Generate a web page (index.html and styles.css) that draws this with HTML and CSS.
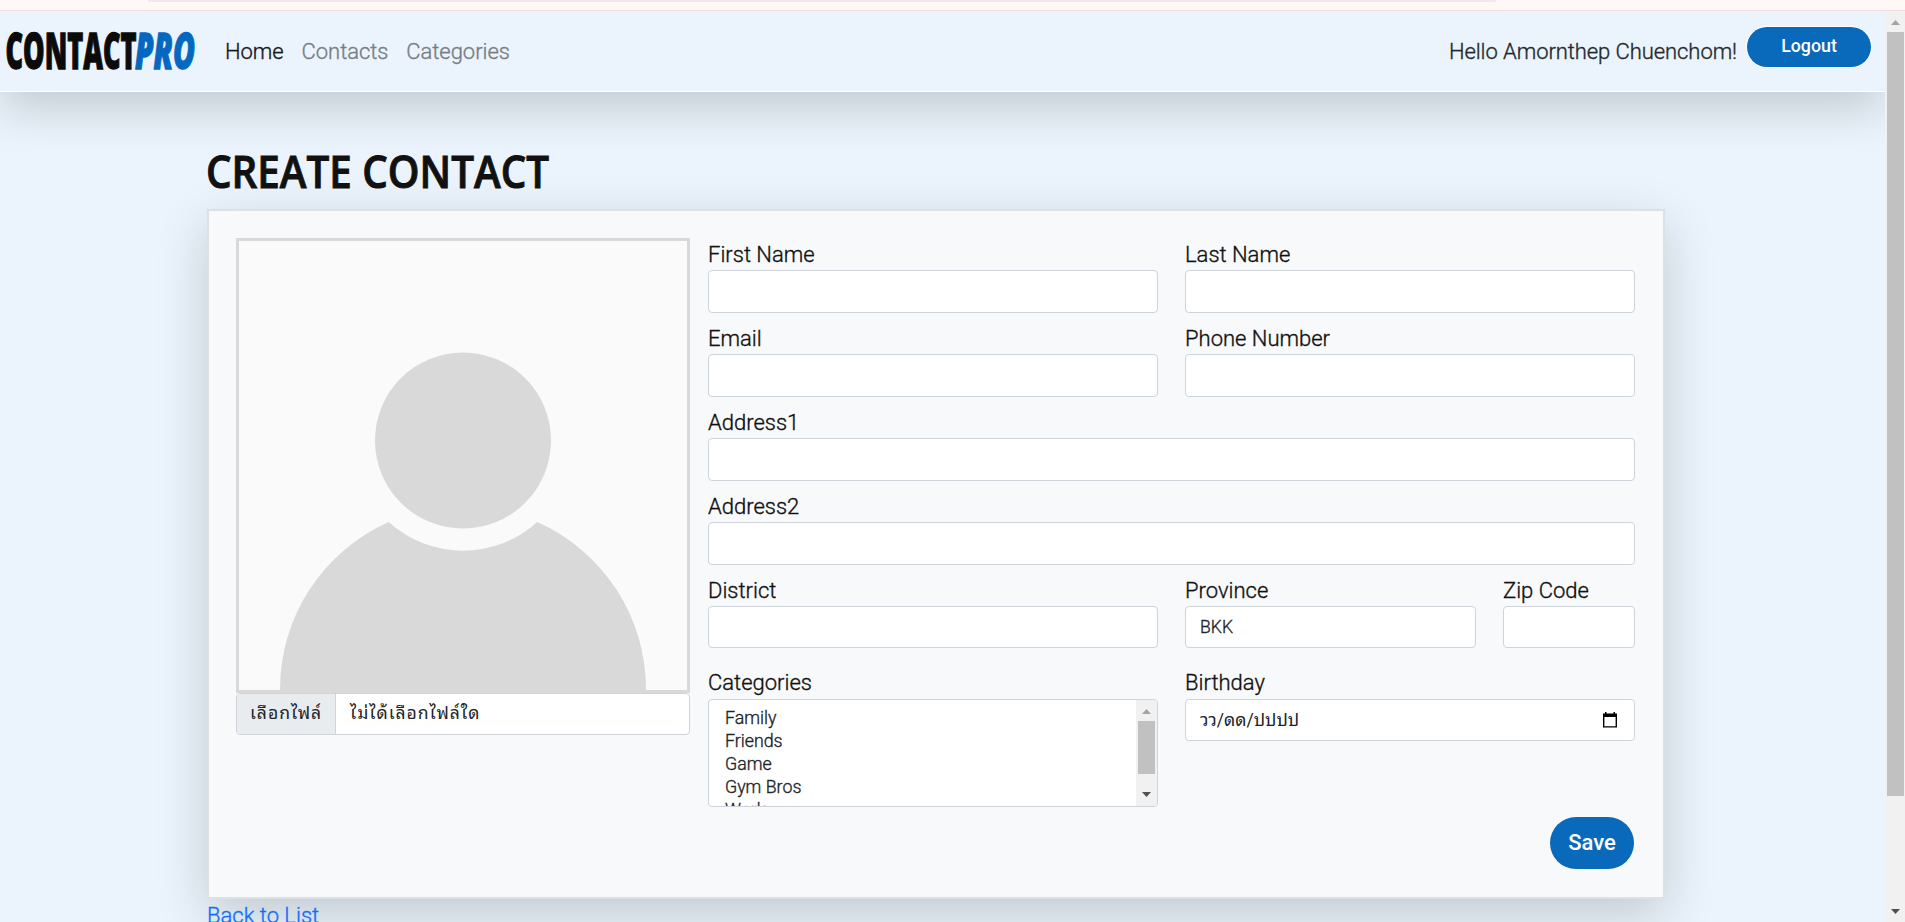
FILE: index.html
```html
<!DOCTYPE html>
<html lang="th">
<head>
<meta charset="utf-8">
<title>Create Contact - ContactPro</title>
<link rel="stylesheet" href="styles.css">
</head>
<body>
<div class="chrome"><div class="omnibox"></div></div>
<div class="viewport">
  <div class="page">
    <nav class="navbar">
      <svg class="logo" width="200" height="60" viewBox="0 0 200 60">
        <text class="logo-dark" x="-0.5" y="42.5" textLength="131" lengthAdjust="spacingAndGlyphs">CONTACT</text>
        <text class="logo-blue" x="129" y="42.5" textLength="60" lengthAdjust="spacingAndGlyphs">PRO</text>
      </svg>
      <a class="nav-link active">Home</a>
      <a class="nav-link">Contacts</a>
      <a class="nav-link">Categories</a>
      <span class="hello">Hello Amornthep Chuenchom!</span>
      <a class="logout">Logout</a>
    </nav>
    <main class="container">
      <h1 class="title"><svg width="360" height="60"><text x="-1" y="45" textLength="343" lengthAdjust="spacingAndGlyphs">CREATE CONTACT</text></svg></h1>
      <section class="card">
        <div class="photo-col">
          <svg class="avatar" viewBox="0 0 448 449">
            <circle cx="224" cy="199.5" r="88"/>
            <path d="M41 449A183 183 0 0 1 149.7 281A110.7 110.7 0 0 0 298.3 281A183 183 0 0 1 407 449Z"/>
          </svg>
          <div class="file"><span class="file-btn">เลือกไฟล์</span><span class="file-name">ไม่ได้เลือกไฟล์ใด</span></div>
        </div>
        <form class="form">
          <div class="field half"><label>First Name</label><div class="control"></div></div>
          <div class="field half"><label>Last Name</label><div class="control"></div></div>
          <div class="field half"><label>Email</label><div class="control"></div></div>
          <div class="field half"><label>Phone Number</label><div class="control"></div></div>
          <div class="field full"><label>Address1</label><div class="control"></div></div>
          <div class="field full"><label>Address2</label><div class="control"></div></div>
          <div class="field half"><label>District</label><div class="control short"></div></div>
          <div class="half split">
            <div class="field"><label>Province</label><div class="control short">BKK</div></div>
            <div class="field"><label>Zip Code</label><div class="control short"></div></div>
          </div>
          <div class="field half last"><label>Categories</label>
            <div class="listbox">
              <ul class="options"><li>Family</li><li>Friends</li><li>Game</li><li>Gym Bros</li><li>Work</li></ul>
              <div class="list-scroll">
                <svg width="9" height="5"><path d="M0 5L4.5 0L9 5Z" fill="#a3a3a3"/></svg>
                <div class="list-thumb"></div>
                <svg width="9" height="5"><path d="M0 0L4.5 5L9 0Z" fill="#505050"/></svg>
              </div>
            </div>
          </div>
          <div class="field half last"><label>Birthday</label>
            <div class="control short date"><span>วว/ดด/ปปปป</span>
              <svg width="14" height="16" viewBox="0 0 14 16"><path d="M0 1.5H2V0H3.5V1.5H10.5V0H12V1.5H14V15.5H0ZM1.4 5V14.2H12.6V5Z" fill-rule="evenodd"/></svg>
            </div>
          </div>
          <div class="actions"><span class="save">Save</span></div>
        </form>
      </section>
      <a class="back">Back to List</a>
    </main>
  </div>
  <div class="scrollbar">
    <svg width="9" height="5"><path d="M0 5L4.5 0L9 5Z" fill="#a3a3a3"/></svg>
    <div class="thumb"></div>
    <svg class="down" width="9" height="5"><path d="M0 0L4.5 5L9 0Z" fill="#505050"/></svg>
  </div>
</div>
</body>
</html>
```
FILE: styles.css
```css
* { box-sizing: border-box; }
body {
  margin: 0;
  height: 922px;
  overflow: hidden;
  font: 300 22px/33px Roboto, "Noto Sans Thai Looped", Loma, Waree, Garuda, "Noto Sans", sans-serif;
  -webkit-text-stroke: .35px;
  color: #111;
  background: #ebf4fc;
}
.chrome { height: 11px; background: #fff8f6; border-bottom: 1px solid #f8dcdf; }
.omnibox { width: 1348px; height: 2px; margin-left: 148px; background: #f4e6ea; border-radius: 0 0 8px 8px; }
.viewport { display: flex; height: 911px; }
.page { flex: 1; height: 911px; overflow: hidden; }

.navbar {
  display: flex;
  height: 81px;
  padding: 0 14px 0 6px;
  border-bottom: 1px solid #fff;
  box-shadow: 0 16px 48px rgba(0, 0, 0, .175);
  background: #ebf4fc;
}
.logo { flex: none; margin: 15px 19px 0 0; overflow: visible; font: 800 49px "Open Sans", sans-serif; -webkit-text-stroke: 0; }
.logo-dark { fill: #0b0b0b; stroke: #0b0b0b; stroke-width: 1.3; }
.logo-blue { fill: #0568c0; stroke: #0568c0; stroke-width: 1.3; font-style: italic; }
.nav-link { margin: 24px 18px 0 0; color: #777d83; letter-spacing: -.05px; white-space: nowrap; }
.nav-link.active { color: #16191c; }
.hello { margin: 24px 10px 0 auto; color: #24292e; letter-spacing: -.07px; white-space: nowrap; }
.logout {
  width: 124px;
  height: 40px;
  margin-top: 16px;
  border-radius: 20px;
  background: #0969ba;
  box-shadow: 0 0 0 1px #fff;
  color: #fff;
  font-size: 17.8px;
  font-weight: 500;
  line-height: 37px;
  text-align: center;
  -webkit-text-stroke: 0;
}

.container { width: 1458px; margin-left: 207px; }
.title { height: 60px; margin: 51px 0 6px; font: 600 46px "Open Sans", sans-serif; -webkit-text-stroke: 0; }
.title svg { display: block; overflow: visible; fill: #111; stroke: #111; stroke-width: 1; }
.card {
  display: flex;
  gap: 18px;
  height: 690px;
  padding: 27px 28px 0 27px;
  border: 2px solid #dce1e5;
  background: #f8f9fb;
  box-shadow: 0 16px 48px rgba(0, 0, 0, .175);
}
.photo-col { width: 454px; }
.avatar { display: block; width: 454px; height: 455px; border: 3px solid #d9d9d9; background: #fafafa; fill: #d9d9d9; }
.file {
  display: flex;
  height: 42px;
  border: 1px solid #ced4da;
  border-radius: 4px;
  overflow: hidden;
  background: #fff;
  color: #212529;
  font-size: 17.6px;
  font-weight: 400;
  letter-spacing: .95px;
  line-height: 38px;
  -webkit-text-stroke: 0;
}
.file-btn { width: 99px; padding-left: 13px; background: #e9ecef; border-right: 1px solid #ced4da; white-space: nowrap; }
.file-name { padding-left: 14px; }

.form { display: grid; grid-template-columns: 450px 450px; column-gap: 27px; row-gap: 8px; align-content: start; margin-top: -1px; }
.full, .actions { grid-column: span 2; }
.field label { display: block; height: 33px; line-height: 35px; }
.control {
  height: 43px;
  padding: 0 14px;
  border: 1px solid #ced4da;
  border-radius: 4px;
  background: #fff;
  color: #212529;
  font-size: 17.6px;
  line-height: 40px;
}
.control.short { height: 42px; }
.split { display: grid; grid-template-columns: 291px 132px; column-gap: 27px; }
.last { margin-top: 10px; }
.last label { line-height: 33px; }
.listbox { display: flex; justify-content: space-between; height: 108px; border: 1px solid #ced4da; border-radius: 4px; background: #fff; overflow: hidden; }
.options { margin: 0; padding: 6px 0 0 16px; list-style: none; font-size: 17.8px; line-height: 23px; color: #212529; }
.options li { height: 23px; }
.list-scroll { display: flex; flex-direction: column; align-items: center; width: 21px; padding: 9px 0; background: #f1f1f1; }
.list-thumb { width: 17px; height: 53px; margin: 7px 0 18px; background: #c1c1c1; }
.date { display: flex; justify-content: space-between; align-items: center; padding-right: 17px; font-weight: 400; -webkit-text-stroke: 0; }
.actions { display: flex; justify-content: flex-end; padding: 2px 1px 0 0; }
.save { width: 84px; height: 52px; border-radius: 26px; background: #0969ba; color: #fff; font-weight: 500; line-height: 51px; text-align: center; -webkit-text-stroke: 0; }
.back { display: block; line-height: 33px; color: #0d6efd; }

.scrollbar { display: flex; flex-direction: column; align-items: center; width: 20px; padding: 9px 0 8px 1px; background: #f1f1f1; }
.thumb { width: 17px; height: 764px; margin-top: 7px; background: #c1c1c1; }
.down { margin-top: auto; }
```
